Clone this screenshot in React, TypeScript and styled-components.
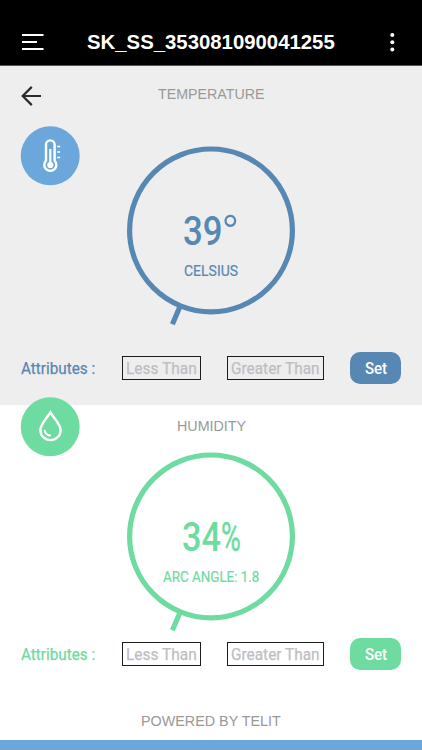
import React, { useLayoutEffect, useRef, useState } from "react";
import styled, { createGlobalStyle } from "styled-components";

const GlobalStyle = createGlobalStyle`
  * { box-sizing: border-box; }
  body { margin: 0; background: #fff; }
`;

const sans = `"Liberation Sans", Arial, sans-serif`;
const din = `Roboto, "Liberation Sans", sans-serif`;

const Screen = styled.main`
  width: 422px;
  height: 750px;
  display: flex;
  flex-direction: column;
  overflow: hidden;
  font-family: ${sans};
  background: #fff;
`;

const FitBox = styled.span<{ $w: number }>`
  display: inline-block;
  width: ${(p) => p.$w}px;
  white-space: nowrap;
  text-align: left;
`;
const FitText = styled.span`
  display: inline-block;
  transform-origin: 0 50%;
`;

/* Condenses or widens a label so that it fills a given width. */
function Fit({ w, children }: { w: number; children: React.ReactNode }) {
  const ref = useRef<HTMLSpanElement>(null);
  const [scale, setScale] = useState(1);
  useLayoutEffect(() => {
    if (ref.current) setScale(w / ref.current.offsetWidth);
  }, [w]);
  return (
    <FitBox $w={w}>
      <FitText ref={ref} style={{ transform: `scaleX(${scale})` }}>{children}</FitText>
    </FitBox>
  );
}

const TopBar = styled.header`
  flex: none;
  height: 66px;
  padding: 19px 22px 0;
  display: grid;
  grid-template-columns: 22px 1fr 22px;
  align-items: center;
  background: #000;
  border-bottom: 1px solid #555;
`;
const Title = styled.h1`
  margin: 0;
  text-align: center;
  color: #fff;
  font-size: 21px;
  line-height: 24px;
  font-weight: 700;
`;
const IconButton = styled.button`
  padding: 0;
  border: 0;
  background: none;
  display: flex;
  justify-content: center;
  height: 24px;
`;

const Panel = styled.section<{ $tone: string; $bg: string; $h: number; $pad: number }>`
  flex: none;
  height: ${(p) => p.$h}px;
  padding-top: ${(p) => p.$pad}px;
  color: ${(p) => p.$tone};
  background: ${(p) => p.$bg};
`;
const PanelHead = styled.div`
  height: 20px;
  padding: 0 21px;
  display: grid;
  grid-template-columns: 22px 1fr 22px;
  align-items: center;
`;
const Caption = styled.h2`
  margin: 0;
  grid-column: 2;
  text-align: center;
  color: #999;
  font: 400 14.5px/20px ${sans};
`;
const Gauge = styled.div<{ $gap: number }>`
  margin-top: ${(p) => p.$gap}px;
  padding: 0 20px;
  display: grid;
  grid-template-columns: 60px 1fr 60px;
  height: 182px;
`;
const Badge = styled.div<{ $shift: number }>`
  width: 60px;
  height: 60px;
  margin-top: ${(p) => p.$shift}px;
`;
const Dial = styled.div`
  width: 170px;
  height: 182px;
  justify-self: center;
  display: grid;
  > * { grid-area: 1 / 1; }
`;
const Readout = styled.div`
  display: flex;
  flex-direction: column;
  align-items: center;
  padding-top: 62px;
  font-family: ${din};
`;
const Value = styled.div`
  display: flex;
  align-items: flex-start;
  height: 46px;
  font-size: 40.5px;
  line-height: 46px;
  font-weight: 500;
`;
const Percent = styled.span`
  font-weight: 400;
  -webkit-text-stroke: 0.5px currentColor;
`;
const DegreeSlot = styled.span`
  margin: 0 -1px 0 -2px;
`;
const Degree = styled.span`
  font-size: 52px;
  line-height: 54px;
  font-weight: 300;
`;
const Unit = styled.div`
  margin-top: 8.5px;
  font-size: 14.5px;
  line-height: 20px;
  font-weight: 400;
  -webkit-text-stroke: 0.2px currentColor;
`;

const Attributes = styled.form<{ $gap: number }>`
  margin-top: ${(p) => p.$gap}px;
  padding-left: 21px;
  height: 32px;
  display: flex;
  align-items: center;
  font: 400 16px/20px ${din};
`;
const AttrLabel = styled.label`
  width: 101px;
  padding-top: 2px;
  display: block;
  -webkit-text-stroke: 0.25px currentColor;
`;
const Field = styled.div<{ $w: number; $gap: number }>`
  width: ${(p) => p.$w}px;
  height: 24px;
  padding-top: 2px;
  margin-right: ${(p) => p.$gap}px;
  border: 1px solid #1c1c1c;
  display: flex;
  align-items: center;
  justify-content: center;
  color: #bebec3;
  -webkit-text-stroke: 0.25px currentColor;
`;
const SetButton = styled.button<{ $tone: string }>`
  width: 51px;
  height: 32px;
  padding: 2px 0 0;
  border: 0;
  border-radius: 10px;
  background: ${(p) => p.$tone};
  color: #fff;
  font: 500 16px/20px ${din};
`;
const Footer = styled.footer`
  flex: 1;
  display: flex;
  flex-direction: column;
  justify-content: flex-end;
  text-align: center;
  color: #999;
  font-size: 14.5px;
  line-height: 20px;
`;
const Credit = styled.div`
  height: 28.5px;
`;
const Strip = styled.div`
  height: 10.5px;
  background: #6ca7db;
`;

function ThermometerBadge() {
  return (
    <svg width="60" height="60" viewBox="0 0 60 60" fill="none">
      <circle cx="30.2" cy="29.8" r="29.5" fill="#6ca7db" />
      <path d="M26 34.7V18.7a4.3 4.3 0 0 1 8.6 0v16a6 6 0 1 1-8.6 0Z" stroke="#fff" strokeWidth="2.4" />
      <path d="M30.3 23V38" stroke="#fff" strokeWidth="2.2" />
      <circle cx="30.3" cy="39" r="3.1" fill="#fff" />
      <path d="M37.2 20.4h3M37.2 26h3M37.2 31.4h3" stroke="#fff" strokeWidth="1.5" />
    </svg>
  );
}

function DropBadge() {
  return (
    <svg width="60" height="60" viewBox="0 0 60 60" fill="none">
      <circle cx="30.2" cy="29.8" r="29.5" fill="#6edba0" />
      <path d="M30.4 15.3C27.1 21 20.4 27 20.4 33.2a10.1 9.9 0 0 0 20.2 0C40.6 27 33.7 21 30.4 15.3Z" stroke="#fff" strokeWidth="2.4" />
      <path d="M24.5 32.8a6.4 6.4 0 0 0 6.4 5.7" stroke="#fff" strokeWidth="2" />
    </svg>
  );
}

function Ring() {
  return (
    <svg width="170" height="182" viewBox="0 0 170 182" fill="none" stroke="currentColor" strokeWidth="5.2">
      <circle cx="85" cy="84.4" r="81.4" />
      <path d="M54.2 160 46.4 178.3" />
    </svg>
  );
}

function AttributeRow({ tone, gap }: { tone: string; gap: number }) {
  return (
    <Attributes $gap={gap}>
      <AttrLabel><Fit w={74.5}>Attributes :</Fit></AttrLabel>
      <Field $w={79} $gap={26}><Fit w={70.5}>Less Than</Fit></Field>
      <Field $w={97} $gap={26.3}><Fit w={88.5}>Greater Than</Fit></Field>
      <SetButton type="button" $tone={tone}><Fit w={22.5}>Set</Fit></SetButton>
    </Attributes>
  );
}

export default function App() {
  return (
    <Screen>
      <GlobalStyle />
      <TopBar>
        <IconButton aria-label="Menu">
          <svg width="22" height="24" viewBox="0 0 22 24" stroke="#fff" strokeWidth="2">
            <path d="M0 5h21.5M0 12h15M0 19h21.5" />
          </svg>
        </IconButton>
        <Title><Fit w={248}>SK_SS_353081090041255</Fit></Title>
        <IconButton aria-label="More">
          <svg width="22" height="24" viewBox="0 0 22 24" fill="#fff">
            <circle cx="14.3" cy="5" r="2" />
            <circle cx="14.3" cy="12.2" r="2" />
            <circle cx="14.3" cy="19.5" r="2" />
          </svg>
        </IconButton>
      </TopBar>

      <Panel $tone="#5788b4" $bg="#eeeeee" $h={338.5} $pad={16}>
        <PanelHead>
          <IconButton aria-label="Back">
            <svg width="22" height="24" viewBox="0 0 22 24" fill="none" stroke="#2b2b2b" strokeWidth="2.2">
              <path d="M20 14H1.7M10.8 4.9 1.7 14l9.1 9.1" />
            </svg>
          </IconButton>
          <Caption><Fit w={107}>TEMPERATURE</Fit></Caption>
        </PanelHead>
        <Gauge $gap={43.5}>
          <Badge $shift={-19.5}><ThermometerBadge /></Badge>
          <Dial>
            <Ring />
            <Readout>
              <Value>
                <Fit w={39.5}>39</Fit>
                <DegreeSlot><Fit w={19}><Degree>°</Degree></Fit></DegreeSlot>
              </Value>
              <Unit><Fit w={54}>CELSIUS</Fit></Unit>
            </Readout>
          </Dial>
        </Gauge>
        <AttributeRow tone="#5788b4" gap={24.7} />
      </Panel>

      <Panel $tone="#6edba0" $bg="#ffffff" $h={290} $pad={11.5}>
        <PanelHead>
          <Caption><Fit w={69}>HUMIDITY</Fit></Caption>
        </PanelHead>
        <Gauge $gap={15.5}>
          <Badge $shift={-54.5}><DropBadge /></Badge>
          <Dial>
            <Ring />
            <Readout>
              <Value><Fit w={39}>34</Fit><Fit w={20}><Percent>%</Percent></Fit></Value>
              <Unit><Fit w={96}>ARC ANGLE: 1.8</Fit></Unit>
            </Readout>
          </Dial>
        </Gauge>
        <AttributeRow tone="#6edba0" gap={4.7} />
      </Panel>

      <Footer>
        <Credit><Fit w={139.5}>POWERED BY TELIT</Fit></Credit>
        <Strip />
      </Footer>
    </Screen>
  );
}
